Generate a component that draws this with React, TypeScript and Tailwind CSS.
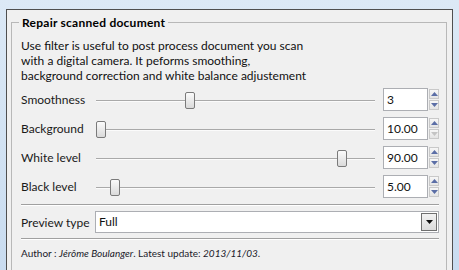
import React from "react";

function Up({ disabled }: { disabled?: boolean }) {
  return (
    <svg width="7" height="4" viewBox="0 0 7 4">
      <polygon points="0,4 7,4 3.5,0" fill={disabled ? "#c4c4c4" : "#5b6ea6"} />
    </svg>
  );
}
function Down({ disabled }: { disabled?: boolean }) {
  return (
    <svg width="7" height="4" viewBox="0 0 7 4">
      <polygon points="0,0 7,0 3.5,4" fill={disabled ? "#c4c4c4" : "#5b6ea6"} />
    </svg>
  );
}

function Row({ label, pos, value, downDisabled }: { label: string; pos: number; value: string; downDisabled?: boolean }) {
  return (
    <div className="flex items-center h-[23px]">
      <div className="w-[75px] text-[12px] leading-[15px] text-[#1a1a1a]">{label}</div>
      <div className="relative w-[279px] h-[23px]">
        <div className="absolute left-0 right-0 top-[12px] h-px bg-[#a9a9a9]" />
        <div className="absolute left-0 right-0 top-[13px] h-px bg-[#fbfbfb]" />
        <div
          className="absolute top-[4px] w-[10px] h-[17px] rounded-[2px] border border-[#7a7a7a] bg-gradient-to-b from-[#fbfbfb] to-[#dadada]"
          style={{ left: pos }}
        />
      </div>
      <div className="ml-[8px] w-[45px] h-[23px] border border-[#acaeb3] bg-white flex items-center pl-[3px] text-[12px] text-[#111]">
        {value}
      </div>
      <div className="w-[11px] h-[23px] flex flex-col justify-between py-[1px] pl-[1px]">
        <div className="h-[10px] border border-[#c9c9c9] bg-gradient-to-b from-[#f7f7f7] to-[#e4e4e4] flex items-center justify-center">
          <Up />
        </div>
        <div className="h-[10px] border border-[#c9c9c9] bg-gradient-to-b from-[#f7f7f7] to-[#e4e4e4] flex items-center justify-center">
          <Down disabled={downDisabled} />
        </div>
      </div>
    </div>
  );
}

export default function App() {
  return (
    <div className="w-[459px] h-[270px] overflow-hidden bg-gradient-to-b from-[#dce9f6] to-[#c9dcf0] pl-[6px] pt-[9px] font-['Lato',sans-serif]">
      <div className="w-[447px] h-[270px] border-l border-t border-r border-[#4f4f4f] bg-[#f0f0f0] pl-[4px] pr-[5px] pt-[12px]">
        <div className="relative h-[260px] border border-[#b8b8b8] flex flex-col">
          <div className="absolute left-[7px] -top-[8px] px-[3px] bg-[#f0f0f0] text-[12px] leading-[15px] font-bold tracking-[0.25px] text-black">
            Repair scanned document
          </div>
          <div className="pl-[9px] pr-[7px] pt-[15px] flex flex-col">
            <div className="text-[12px] leading-[15px] text-[#111]">
              Use filter is useful to post process document you scan
              <br />
              with a digital camera. It peforms smoothing,
              <br />
              background correction and white balance adjustement
            </div>
            <div className="mt-[5px] flex flex-col gap-[6px]">
              <Row label="Smoothness" pos={89} value="3" />
              <Row label="Background" pos={0} value="10.00" downDisabled />
              <Row label="White level" pos={241} value="90.00" />
              <Row label="Black level" pos={14} value="5.00" />
            </div>
            <div className="mt-[6px] border-t border-[#a0a0a0] border-b border-b-white" />
            <div className="mt-[5px] flex items-center h-[22px]">
              <div className="w-[74px] text-[12px] leading-[15px] text-[#1a1a1a]">Preview type</div>
              <div className="flex-1 h-[22px] border border-[#acaeb3] bg-white flex items-center justify-between pl-[3px] pr-[1px]">
                <span className="text-[12px] text-[#111]">Full</span>
                <div className="w-[16px] h-[18px] border border-[#6f6f6f] bg-gradient-to-b from-[#f2f2f2] to-[#dcdcdc] flex items-center justify-center">
                  <svg width="7" height="4" viewBox="0 0 7 4">
                    <polygon points="0,0 7,0 3.5,4" fill="#111" />
                  </svg>
                </div>
              </div>
            </div>
            <div className="mt-[5px] border-t border-[#a0a0a0] border-b border-b-white" />
            <div className="mt-[6px] text-[10px] leading-[14px] text-[#1a1a2a]">
              Author : <i>Jérôme Boulanger</i>. Latest update: <i>2013/11/03</i>.
            </div>
          </div>
          <div className="mt-[11px] h-[10px] bg-white" />
        </div>
      </div>
    </div>
  );
}
